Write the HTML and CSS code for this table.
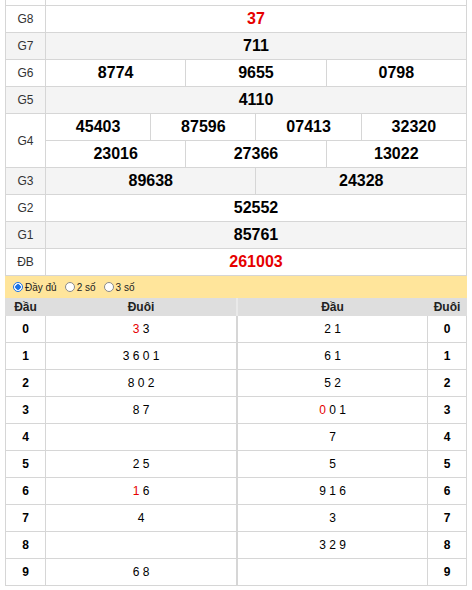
FILE: index.html
```html
<!DOCTYPE html>
<html lang="vi">
<head>
<meta charset="utf-8">
<title>Kết quả xổ số</title>
<link rel="stylesheet" href="styles.css">
</head>
<body>
<div class="wrap">
  <table class="kq">
    <colgroup><col class="c-lbl"><col span="12"></colgroup>
    <tr class="cut"><td></td><td colspan="12"></td></tr>
    <tr><td class="lbl">G8</td><td colspan="12" class="n red">37</td></tr>
    <tr class="alt"><td class="lbl">G7</td><td colspan="12" class="n">711</td></tr>
    <tr><td class="lbl">G6</td><td colspan="4" class="n">8774</td><td colspan="4" class="n">9655</td><td colspan="4" class="n">0798</td></tr>
    <tr class="alt"><td class="lbl">G5</td><td colspan="12" class="n">4110</td></tr>
    <tr><td class="lbl" rowspan="2">G4</td><td colspan="3" class="n">45403</td><td colspan="3" class="n">87596</td><td colspan="3" class="n">07413</td><td colspan="3" class="n">32320</td></tr>
    <tr><td colspan="4" class="n">23016</td><td colspan="4" class="n">27366</td><td colspan="4" class="n">13022</td></tr>
    <tr class="alt"><td class="lbl">G3</td><td colspan="6" class="n">89638</td><td colspan="6" class="n">24328</td></tr>
    <tr><td class="lbl">G2</td><td colspan="12" class="n">52552</td></tr>
    <tr class="alt"><td class="lbl">G1</td><td colspan="12" class="n">85761</td></tr>
    <tr><td class="lbl">ĐB</td><td colspan="12" class="n red">261003</td></tr>
  </table>

  <div class="opts">
    <label class="opt"><span class="radio on"></span>Đầy đủ</label>
    <label class="opt"><span class="radio"></span>2 số</label>
    <label class="opt"><span class="radio"></span>3 số</label>
  </div>

  <div class="lt">
    <table class="lo lo-left">
      <thead><tr><th class="hd">Đầu</th><th>Đuôi</th></tr></thead>
      <tbody>
        <tr><td class="hd">0</td><td class="v"><span class="red">3</span> 3</td></tr>
        <tr><td class="hd">1</td><td class="v">3 6 0 1</td></tr>
        <tr><td class="hd">2</td><td class="v">8 0 2</td></tr>
        <tr><td class="hd">3</td><td class="v">8 7</td></tr>
        <tr><td class="hd">4</td><td class="v"></td></tr>
        <tr><td class="hd">5</td><td class="v">2 5</td></tr>
        <tr><td class="hd">6</td><td class="v"><span class="red">1</span> 6</td></tr>
        <tr><td class="hd">7</td><td class="v">4</td></tr>
        <tr><td class="hd">8</td><td class="v"></td></tr>
        <tr><td class="hd">9</td><td class="v">6 8</td></tr>
      </tbody>
    </table>
    <table class="lo lo-right">
      <thead><tr><th>Đầu</th><th class="hd">Đuôi</th></tr></thead>
      <tbody>
        <tr><td class="v">2 1</td><td class="hd">0</td></tr>
        <tr><td class="v">6 1</td><td class="hd">1</td></tr>
        <tr><td class="v">5 2</td><td class="hd">2</td></tr>
        <tr><td class="v"><span class="red">0</span> 0 1</td><td class="hd">3</td></tr>
        <tr><td class="v">7</td><td class="hd">4</td></tr>
        <tr><td class="v">5</td><td class="hd">5</td></tr>
        <tr><td class="v">9 1 6</td><td class="hd">6</td></tr>
        <tr><td class="v">3</td><td class="hd">7</td></tr>
        <tr><td class="v">3 2 9</td><td class="hd">8</td></tr>
        <tr><td class="v"></td><td class="hd">9</td></tr>
      </tbody>
    </table>
  </div>
</div>
</body>
</html>
```

FILE: styles.css
```css
html, body {
  margin: 0;
  padding: 0;
  background: #fff;
}
body {
  font-family: "Liberation Sans", Arial, sans-serif;
  color: #000;
}
.wrap {
  width: 462px;
  margin-left: 5px;
}
.kq {
  width: 462px;
  border-collapse: collapse;
  table-layout: fixed;
}
.kq col.c-lbl {
  width: 40px;
}
.kq td {
  border: 1px solid #d6d6d6;
  height: 26px;
  padding: 0;
  text-align: center;
  vertical-align: middle;
}
.kq tr.cut td {
  height: 5px;
  border-top: none;
  font-size: 0;
  line-height: 0;
}
.kq tr.alt td {
  background: #f4f4f4;
}
.kq td.lbl {
  font-size: 12px;
  color: #333;
  background: #fff;
}
.kq tr.alt td.lbl {
  background: #f4f4f4;
}
.kq td.n {
  font-size: 16px;
  font-weight: bold;
  color: #000;
}
.red {
  color: #e60000;
}
.kq td.n.red {
  color: #e60000;
}
.opts {
  display: flex;
  align-items: center;
  gap: 8px;
  height: 22px;
  padding-left: 8px;
  background: #ffe59b;
  font-size: 10px;
  color: #222;
}
.opt {
  display: flex;
  align-items: center;
  gap: 2px;
}
.radio {
  box-sizing: border-box;
  width: 10px;
  height: 10px;
  border-radius: 50%;
  border: 1px solid #8a8a8a;
  background: #fff;
}
.radio.on {
  border: 1px solid #1a73e8;
  background: radial-gradient(circle, #1a73e8 0 2.5px, #fff 3px);
}
.lt {
  display: flex;
}
.lo {
  border-collapse: collapse;
  table-layout: fixed;
}
.lo-left {
  width: 232px;
}
.lo-right {
  width: 230px;
}
.lo th {
  background: #dedede;
  height: 18px;
  padding: 0;
  font-size: 12px;
  font-weight: bold;
  color: #222;
  border: 1px solid #dedede;
  border-top: none;
  border-bottom: none;
}
.lo-left th.hd {
  width: 39px;
}
.lo-right th.hd {
  width: 38px;
}
.lo-left th:last-child {
  border-right-color: #e9e9e9;
}
.lo-right th:first-child {
  border-left-color: #e9e9e9;
}
.lo td {
  border: 1px solid #d6d6d6;
  height: 26px;
  padding: 0;
  text-align: center;
  vertical-align: middle;
}
.lo tbody tr:first-child td {
  border-top: none;
}
.lo td.hd {
  font-size: 12px;
  font-weight: bold;
}
.lo td.v {
  font-size: 12px;
}
```
